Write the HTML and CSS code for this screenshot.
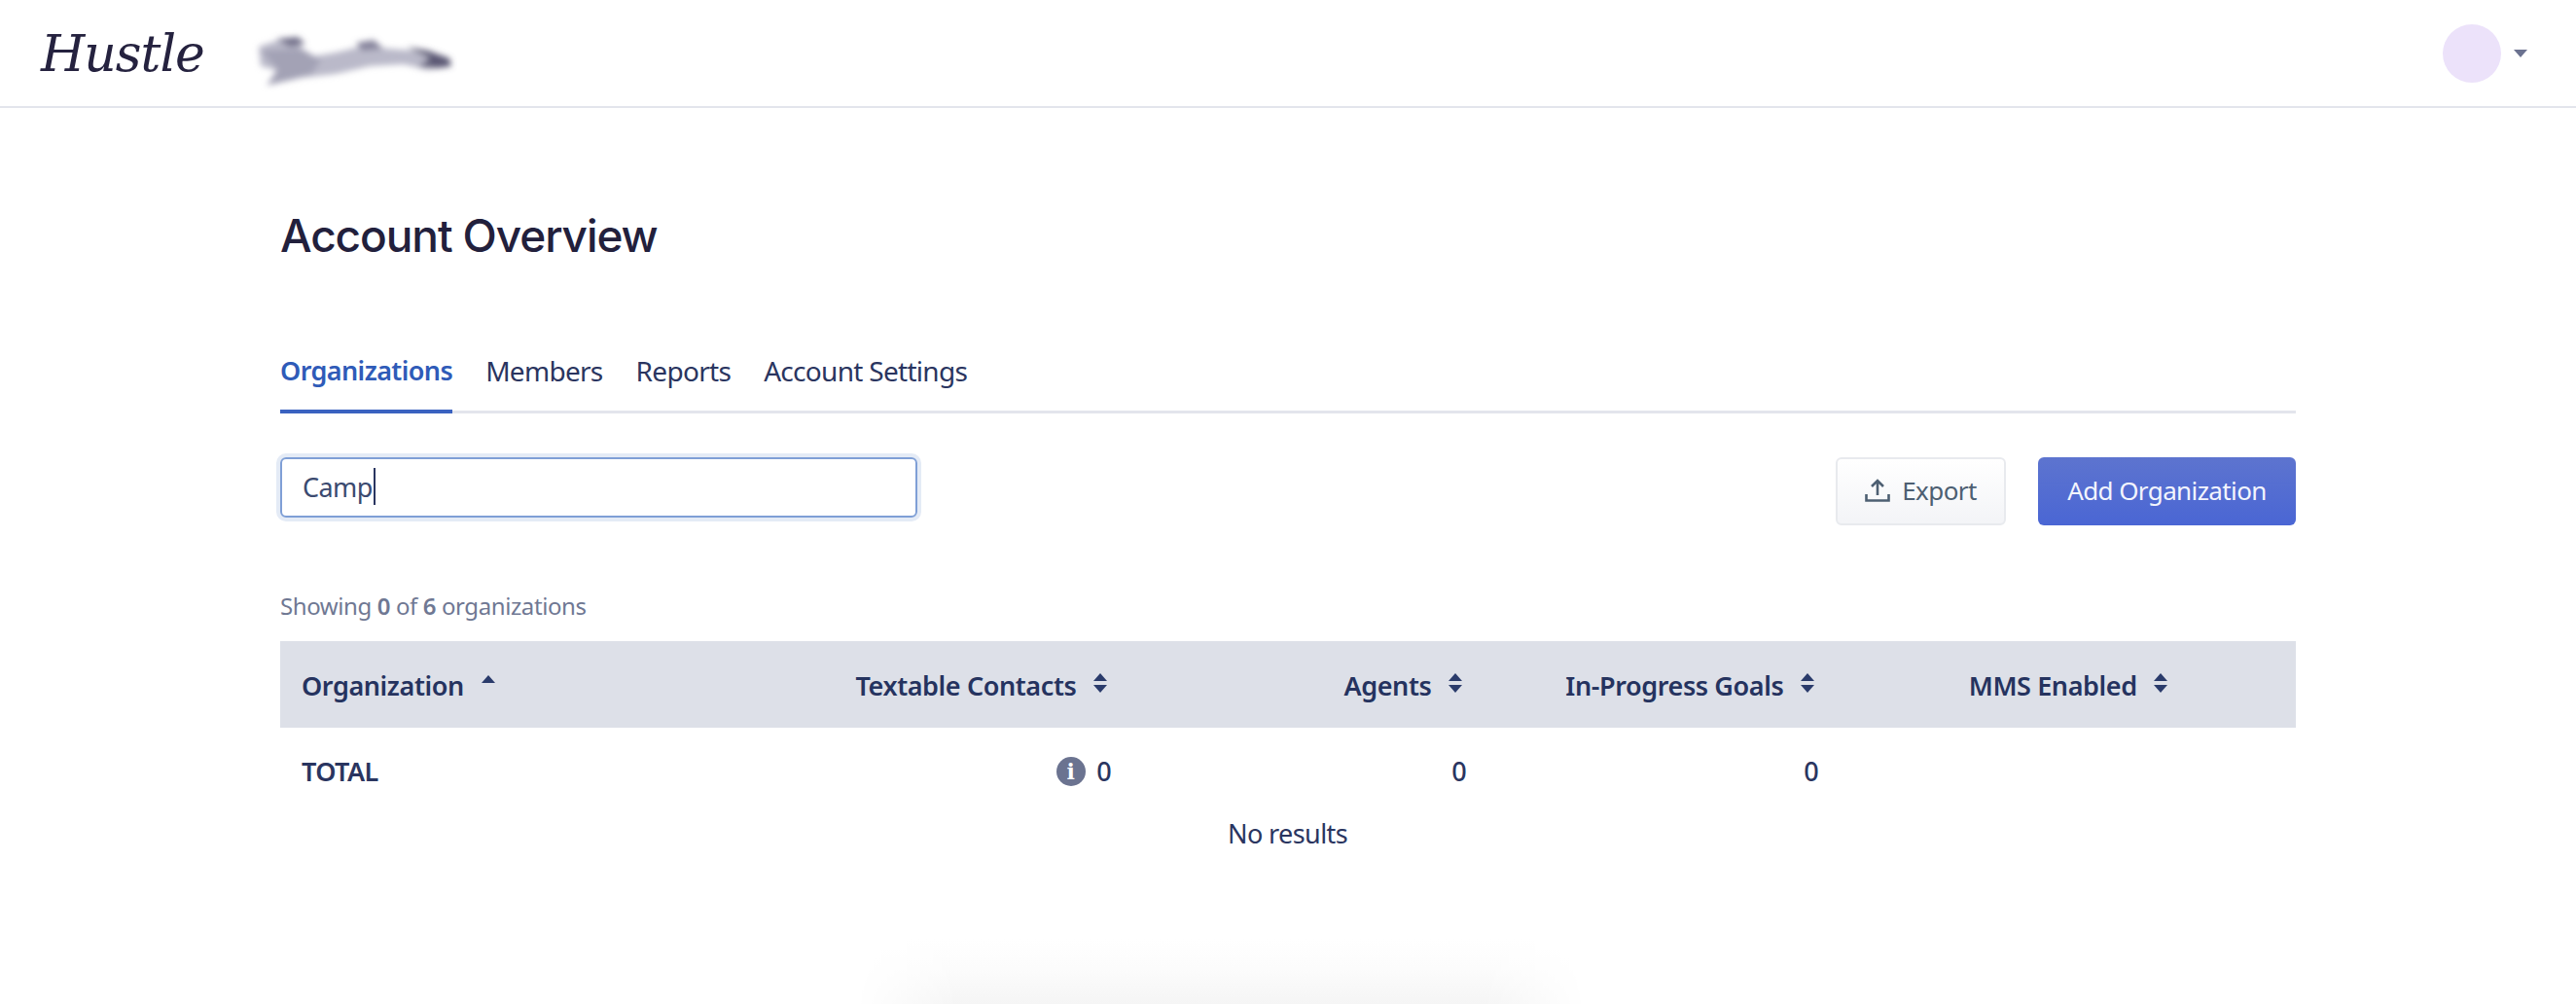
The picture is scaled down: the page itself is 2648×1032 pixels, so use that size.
FILE: index.html
```html
<!DOCTYPE html>
<html lang="en">
<head>
<meta charset="utf-8">
<title>Account Overview</title>
<link rel="stylesheet" href="styles.css">
</head>
<body>
<header class="topbar">
  <div class="brand">
    <span class="logo">Hustle</span>
    <svg class="smudge" width="220" height="70" viewBox="0 0 220 70" aria-hidden="true">
      <defs><filter id="blur" x="-20%" y="-40%" width="140%" height="180%"><feGaussianBlur stdDeviation="3"/></filter></defs>
      <g filter="url(#blur)">
        <path d="M16 20 L40 12 L58 14 L60 24 L72 30 L95 26 L120 20 L150 22 L175 24 L205 30 L212 40 L190 44 L165 38 L130 40 L95 48 L60 52 L24 60 L34 44 L18 40Z" fill="#bab9c9"/>
        <path d="M18 24 L60 22 L80 34 L70 48 L26 59 L36 44Z" fill="#a3a2b5"/>
        <path d="M34 12 L56 10 L64 17 L48 20Z" fill="#6f6d88"/>
        <path d="M116 16 L134 13 L144 22 L122 24Z" fill="#85839b"/>
        <path d="M168 20 L190 24 L212 32 L214 40 L200 42 L180 40 L192 32Z" fill="#5b5974"/>
      </g>
    </svg>
  </div>
  <div class="account">
    <span class="avatar"></span>
    <svg class="caret" width="14" height="8" viewBox="0 0 14 8" aria-hidden="true"><path d="M0 0H14L7 8Z"/></svg>
  </div>
</header>

<main class="content">
  <h1 class="title">Account Overview</h1>

  <nav class="tabs">
    <a class="tab tab-active">Organizations</a>
    <a class="tab">Members</a>
    <a class="tab">Reports</a>
    <a class="tab">Account Settings</a>
  </nav>

  <div class="toolbar">
    <div class="search"><span class="search-text">Camp</span><span class="cursor"></span></div>
    <div class="actions">
      <button class="btn btn-light">
        <svg width="26" height="26" viewBox="0 0 26 26" fill="none" stroke="#4d5f72" stroke-width="2.6" aria-hidden="true"><path d="M13 18V3M7 9l6-6 6 6M1.500 17v6.500h23V17"/></svg>
        Export
      </button>
      <button class="btn btn-primary">Add Organization</button>
    </div>
  </div>

  <p class="count">Showing <b>0</b> of <b>6</b> organizations</p>

  <table class="grid">
    <colgroup><col class="c1"><col class="c2"><col class="c3"><col class="c4"><col class="c5"></colgroup>
    <thead>
      <tr>
        <th class="left">Organization <svg class="sort sort-first" width="14" height="20" viewBox="0 0 14 20" aria-hidden="true"><path d="M7 2l7 8H0Z"/></svg></th>
        <th>Textable Contacts <svg class="sort" width="14" height="20" viewBox="0 0 14 20" aria-hidden="true"><path d="M7 0l7 8H0ZM0 12H14L7 20Z"/></svg></th>
        <th>Agents <svg class="sort" width="14" height="20" viewBox="0 0 14 20" aria-hidden="true"><path d="M7 0l7 8H0ZM0 12H14L7 20Z"/></svg></th>
        <th>In-Progress Goals <svg class="sort" width="14" height="20" viewBox="0 0 14 20" aria-hidden="true"><path d="M7 0l7 8H0ZM0 12H14L7 20Z"/></svg></th>
        <th class="center">MMS Enabled <svg class="sort" width="14" height="20" viewBox="0 0 14 20" aria-hidden="true"><path d="M7 0l7 8H0ZM0 12H14L7 20Z"/></svg></th>
      </tr>
    </thead>
    <tbody>
      <tr class="total">
        <td class="left">TOTAL</td>
        <td><span class="info">i</span> 0</td>
        <td>0</td>
        <td>0</td>
        <td></td>
      </tr>
      <tr class="empty"><td colspan="5">No results</td></tr>
    </tbody>
  </table>
</main>

<div class="floating-shadow"></div>
</body>
</html>
```

FILE: styles.css
```css
* { box-sizing: border-box; }
html, body { margin: 0; height: 100%; overflow: hidden; background: #fff; }
body { font-family: "Noto Sans", "Open Sans", sans-serif; color: #2a3560; position: relative; }

.topbar {
  height: 111px;
  border-bottom: 2px solid #e3e5ec;
  display: flex;
  align-items: center;
  justify-content: space-between;
  padding: 0 50px 0 42px;
}
.brand { display: flex; align-items: center; gap: 40px; }
.logo {
  font-family: "DejaVu Serif", "Liberation Serif", serif;
  font-style: italic;
  font-size: 52px;
  letter-spacing: -1px;
  color: #25223f;
  line-height: 56px;
}
.smudge { display: block; margin-top: 16px; }
.account { display: flex; align-items: center; gap: 13px; }
.avatar { width: 60px; height: 60px; border-radius: 50%; background: #ece2fa; }
.caret { fill: #6b7290; display: block; }

.content { padding: 0 288px; }
.title {
  margin: 101px 0 0;
  font-family: "Inter", sans-serif;
  font-size: 46px;
  line-height: 60px;
  font-weight: 500;
  letter-spacing: -1.1px;
  color: #22203c;
}

.tabs {
  display: flex;
  gap: 34px;
  margin-top: 76px;
  border-bottom: 3px solid #e3e5ec;
  height: 77px;
}
.tab {
  font-size: 28px;
  line-height: 36px;
  padding-top: 15px;
  height: 77px;
  letter-spacing: -0.7px;
  color: #2a3560;
}
.tab-active { font-size: 27px; letter-spacing: -0.6px; color: #2f5bb8; font-weight: 600; border-bottom: 4px solid #3a62c0; }

.toolbar {
  display: flex;
  justify-content: space-between;
  align-items: flex-start;
  margin-top: 45px;
}
.search {
  width: 655px;
  height: 62px;
  border: 2px solid #7f9fd6;
  border-radius: 6px;
  box-shadow: 0 0 0 4px #e4ebf6;
  padding: 0 0 2px 21px;
  display: flex;
  align-items: center;
  font-size: 27px;
  letter-spacing: -0.6px;
  color: #3b4a70;
}
.cursor { width: 2px; height: 38px; background: #2a3560; margin-left: 1px; }
.actions { display: flex; gap: 33px; }
.btn {
  font-family: inherit;
  font-size: 26px;
  letter-spacing: -0.6px;
  height: 70px;
  border-radius: 6px;
  display: flex;
  align-items: center;
  justify-content: center;
  gap: 12px;
  padding-bottom: 3px;
}
.btn-light {
  width: 175px;
  color: #4d5f72;
  border: 2px solid #e8eaee;
  background: linear-gradient(#ffffff, #f3f4f7);
}
.btn-primary {
  width: 265px;
  color: #f3f5fd;
  border: 0;
  background: linear-gradient(#5d74cf, #4a66d4);
}

.count {
  margin: 67px 0 0;
  font-size: 24px;
  line-height: 32px;
  letter-spacing: -0.4px;
  color: #6f7893;
}
.count b { font-weight: 600; }

.grid {
  width: 2072px;
  margin-top: 20px;
  border-collapse: collapse;
  table-layout: fixed;
  font-size: 27px;
  letter-spacing: -0.6px;
}
.c1 { width: 500px; }
.c2 { width: 377px; }
.c3 { width: 365px; }
.c4 { width: 362px; }
.c5 { width: 468px; }
th, td { padding: 0 23px 0 22px; text-align: right; }
th { padding: 2px 27px 0 22px; letter-spacing: -0.4px; }
.left { text-align: left; }
th.center { text-align: center; padding: 2px 22px 0; }
thead tr { height: 89px; background: #dde0e8; }
th { font-weight: 600; color: #25335f; }
.sort { fill: #2a3b6b; vertical-align: 3px; margin-left: 11px; }
.sort-first { margin-left: 12px; }
.total { height: 89px; }
.total td { font-weight: 500; }
.total .left { font-weight: 600; }
.info {
  display: inline-block;
  width: 30px;
  height: 30px;
  border-radius: 50%;
  background: #6b7390;
  color: #fff;
  font-family: "DejaVu Serif", serif;
  font-weight: 700;
  font-size: 22px;
  line-height: 30px;
  text-align: center;
  letter-spacing: 0;
  margin-right: 5px;
  vertical-align: 2px;
}
.empty td { text-align: center; height: 38px; font-weight: 400; }

.floating-shadow {
  position: absolute;
  left: 880px;
  top: 965px;
  width: 750px;
  height: 67px;
  background: linear-gradient(to top, #f5f5f5, #fcfcfc 55%, #ffffff);
  -webkit-mask-image: linear-gradient(to right, transparent, #000 14%, #000 86%, transparent);
  mask-image: linear-gradient(to right, transparent, #000 14%, #000 86%, transparent);
}
```
